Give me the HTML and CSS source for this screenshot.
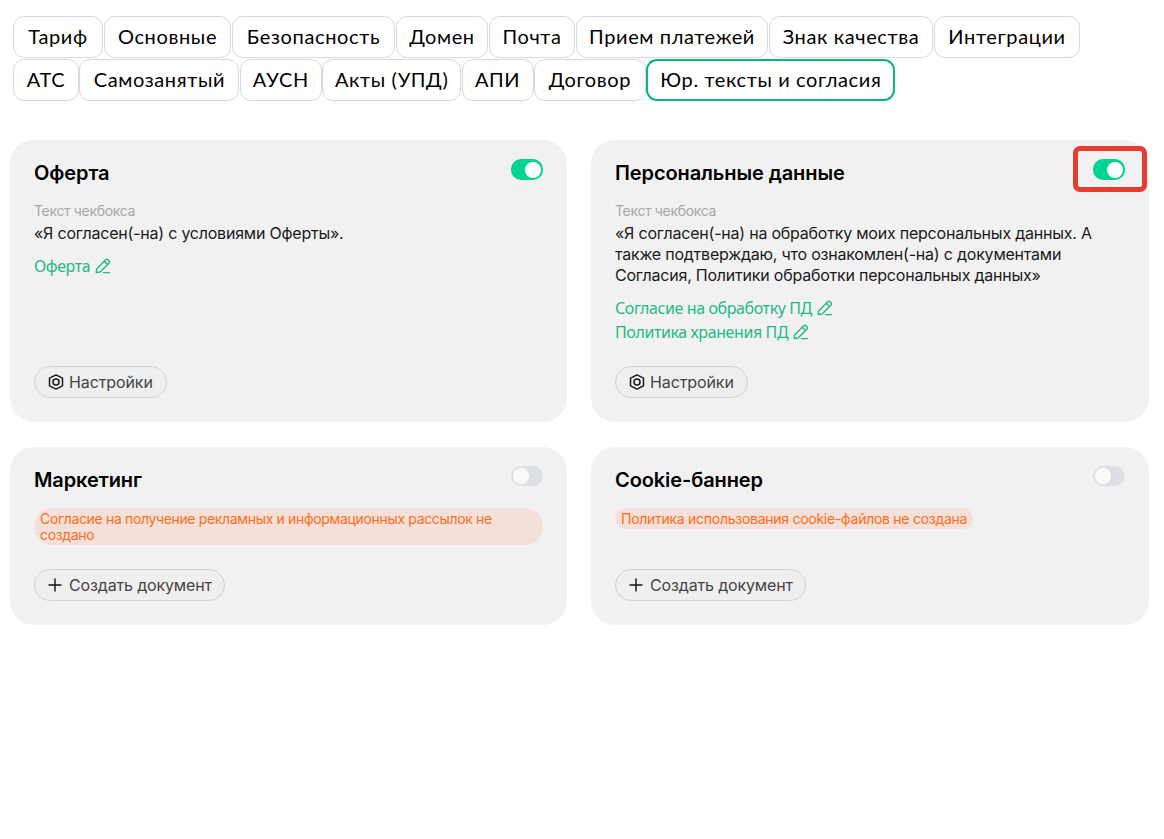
FILE: index.html
```
<!DOCTYPE html>
<html lang="ru">
  <head>
    <meta charset="utf-8" />
    <title>Юр. тексты и согласия</title>
    <link rel="stylesheet" href="styles.css" />
  </head>
  <body>
    <svg class="sprite">
      <symbol id="edit" viewBox="0 0 16 16">
        <path d="M1.2 14.5 1.7 10.9 10.6 1.8a1.8 1.8 0 0 1 2.5 0l.9.9a1.8 1.8 0 0 1 0 2.5L5 14Z M9.3 3.2l3.4 3.4 M8.4 14.6h6.3" />
      </symbol>
      <symbol id="gear" viewBox="0 0 16 16">
        <path d="M8 .9 14.5 4.2v7.6L8 15.1 1.5 11.8V4.2Z" />
        <circle cx="8" cy="8" r="3" />
      </symbol>
      <symbol id="plus" viewBox="0 0 14 14">
        <path d="M7 1v12M1 7h12" />
      </symbol>
    </svg>

    <nav class="tabs">
      <div class="tabs-row first">
        <a class="tab">Тариф</a>
        <a class="tab">Основные</a>
        <a class="tab">Безопасность</a>
        <a class="tab">Домен</a>
        <a class="tab">Почта</a>
        <a class="tab">Прием платежей</a>
        <a class="tab">Знак качества</a>
        <a class="tab">Интеграции</a>
      </div>
      <div class="tabs-row second">
        <a class="tab">АТС</a>
        <a class="tab">Самозанятый</a>
        <a class="tab">АУСН</a>
        <a class="tab">Акты (УПД)</a>
        <a class="tab">АПИ</a>
        <a class="tab">Договор</a>
        <a class="tab active">Юр. тексты и согласия</a>
      </div>
    </nav>

    <main class="cards">
      <section class="card">
        <div class="card-head">
          <h2>Оферта</h2>
          <div class="switch on"><span class="knob"></span></div>
        </div>
        <div class="label">Текст чекбокса</div>
        <p class="text">«Я согласен(-на) с условиями Оферты».</p>
        <div class="links">
          <a class="link">Оферта <svg class="edit"><use href="#edit" /></svg></a>
        </div>
        <button class="btn"><svg class="gear"><use href="#gear" /></svg>Настройки</button>
      </section>

      <section class="card">
        <div class="card-head">
          <h2>Персональные данные</h2>
          <div class="switch on">
            <span class="knob"></span>
            <span class="highlight"></span>
          </div>
        </div>
        <div class="label">Текст чекбокса</div>
        <p class="text">
          «Я согласен(-на) на обработку моих персональных данных. А<br />
          также подтверждаю, что ознакомлен(-на) с документами<br />
          Согласия, Политики обработки персональных данных»
        </p>
        <div class="links">
          <a class="link">Согласие на обработку ПД <svg class="edit"><use href="#edit" /></svg></a>
          <a class="link">Политика хранения ПД <svg class="edit"><use href="#edit" /></svg></a>
        </div>
        <button class="btn"><svg class="gear"><use href="#gear" /></svg>Настройки</button>
      </section>

      <section class="card">
        <div class="card-head">
          <h2>Маркетинг</h2>
          <div class="switch"><span class="knob"></span></div>
        </div>
        <div class="warning">Согласие на получение рекламных и информационных рассылок не<br />создано</div>
        <button class="btn create"><svg class="plus"><use href="#plus" /></svg>Создать документ</button>
      </section>

      <section class="card">
        <div class="card-head">
          <h2>Cookie-баннер</h2>
          <div class="switch"><span class="knob"></span></div>
        </div>
        <div class="warning short">Политика использования cookie-файлов не создана</div>
        <button class="btn create"><svg class="plus"><use href="#plus" /></svg>Создать документ</button>
      </section>
    </main>
  </body>
</html>
```
FILE: styles.css
```
* {
  box-sizing: border-box;
}

body {
  margin: 0;
  background: #fff;
  color: #000;
  font-family: "Inter", sans-serif;
}

.sprite {
  display: none;
}

svg {
  flex: none;
  fill: none;
  stroke: currentColor;
  stroke-linecap: round;
  stroke-linejoin: round;
}

/* tabs */
.tabs {
  padding: 16px 13px 0;
}

.tabs-row {
  display: grid;
  gap: 1px;
  margin-bottom: 1px;
}

.first {
  grid-template-columns: 90px 127px 163px 92px 86px 192px 164px 146px;
}

.second {
  grid-template-columns: 66px 160px 82px 139px 72px 112px 249px;
  column-gap: 0.4px;
}

.tab {
  display: flex;
  align-items: center;
  justify-content: center;
  height: 42px;
  padding-bottom: 2px;
  border: 1px solid #d9d9d9;
  border-radius: 11px;
  font-family: "Lato", sans-serif;
  font-size: 20px;
  letter-spacing: 0.62px;
  white-space: nowrap;
}

.tab.active {
  border: 2px solid #0cb47f;
}

/* cards */
.cards {
  display: grid;
  grid-template-columns: 557px 558px;
  grid-template-rows: 282px 178px;
  gap: 24.5px 24px;
  padding: 38px 10px 0;
}

.card {
  display: flex;
  flex-direction: column;
  align-items: flex-start;
  padding: 19px 24px 24px;
  border-radius: 24px;
  background: #f1f1f1;
}

.card-head {
  display: flex;
  align-items: flex-start;
  justify-content: space-between;
  width: 100%;
}

h2 {
  margin: 0;
  font-size: 20px;
  font-weight: 600;
  line-height: 28px;
  letter-spacing: -0.1px;
}

.switch {
  position: relative;
  display: flex;
  align-items: center;
  width: 32px;
  height: 20px;
  padding: 0 2px;
  border-radius: 10px;
  background: #dce0e5;
}

.switch.on {
  justify-content: flex-end;
  height: 21px;
  background: #00d492;
}

.knob {
  width: 16px;
  height: 16px;
  border-radius: 50%;
  background: #f9f9f9;
}

.on .knob {
  background: #fff;
}

.highlight {
  position: absolute;
  top: -13px;
  left: -20px;
  width: 74px;
  height: 46px;
  border: 5px solid #e53c32;
  border-radius: 7px;
}

.label {
  margin-top: 15px;
  color: #a6a6a6;
  font-size: 14px;
  line-height: 18px;
  letter-spacing: -0.33px;
}

.text {
  margin: 3px 0 0;
  color: #1a1a1a;
  font-size: 16px;
  line-height: 21px;
  letter-spacing: -0.22px;
  white-space: nowrap;
}

.links {
  margin-top: 10px;
}

.link {
  display: flex;
  align-items: center;
  gap: 5px;
  height: 24px;
  color: #1fba87;
  font-family: "Noto Sans", sans-serif;
  font-size: 16px;
  letter-spacing: -0.4px;
}

.edit {
  width: 16px;
  height: 16px;
  stroke-width: 1.4;
}

.btn {
  display: flex;
  align-items: center;
  gap: 5px;
  height: 32px;
  margin-top: auto;
  padding: 0 13px;
  border: 1px solid #d2d2d2;
  border-radius: 16px;
  background: #efefef;
  color: #444;
  font-family: "Inter", sans-serif;
  font-size: 16px;
  letter-spacing: -0.1px;
}

.create {
  gap: 7px;
  padding: 0 12px 0 13px;
  letter-spacing: -0.15px;
}

.gear {
  width: 16px;
  height: 16px;
  color: #1a1a1a;
  stroke-width: 1.5;
}

.plus {
  width: 14px;
  height: 14px;
  color: #111;
  stroke-width: 1.4;
}

.warning {
  width: 100%;
  margin-top: 14px;
  padding: 3px 6px 2px;
  border-radius: 18px;
  background: #f3e1d9;
  color: #ff6b1a;
  font-size: 14px;
  line-height: 16px;
  letter-spacing: -0.34px;
  white-space: nowrap;
}

.short {
  width: auto;
  border-radius: 11px;
  letter-spacing: -0.27px;
}
```
